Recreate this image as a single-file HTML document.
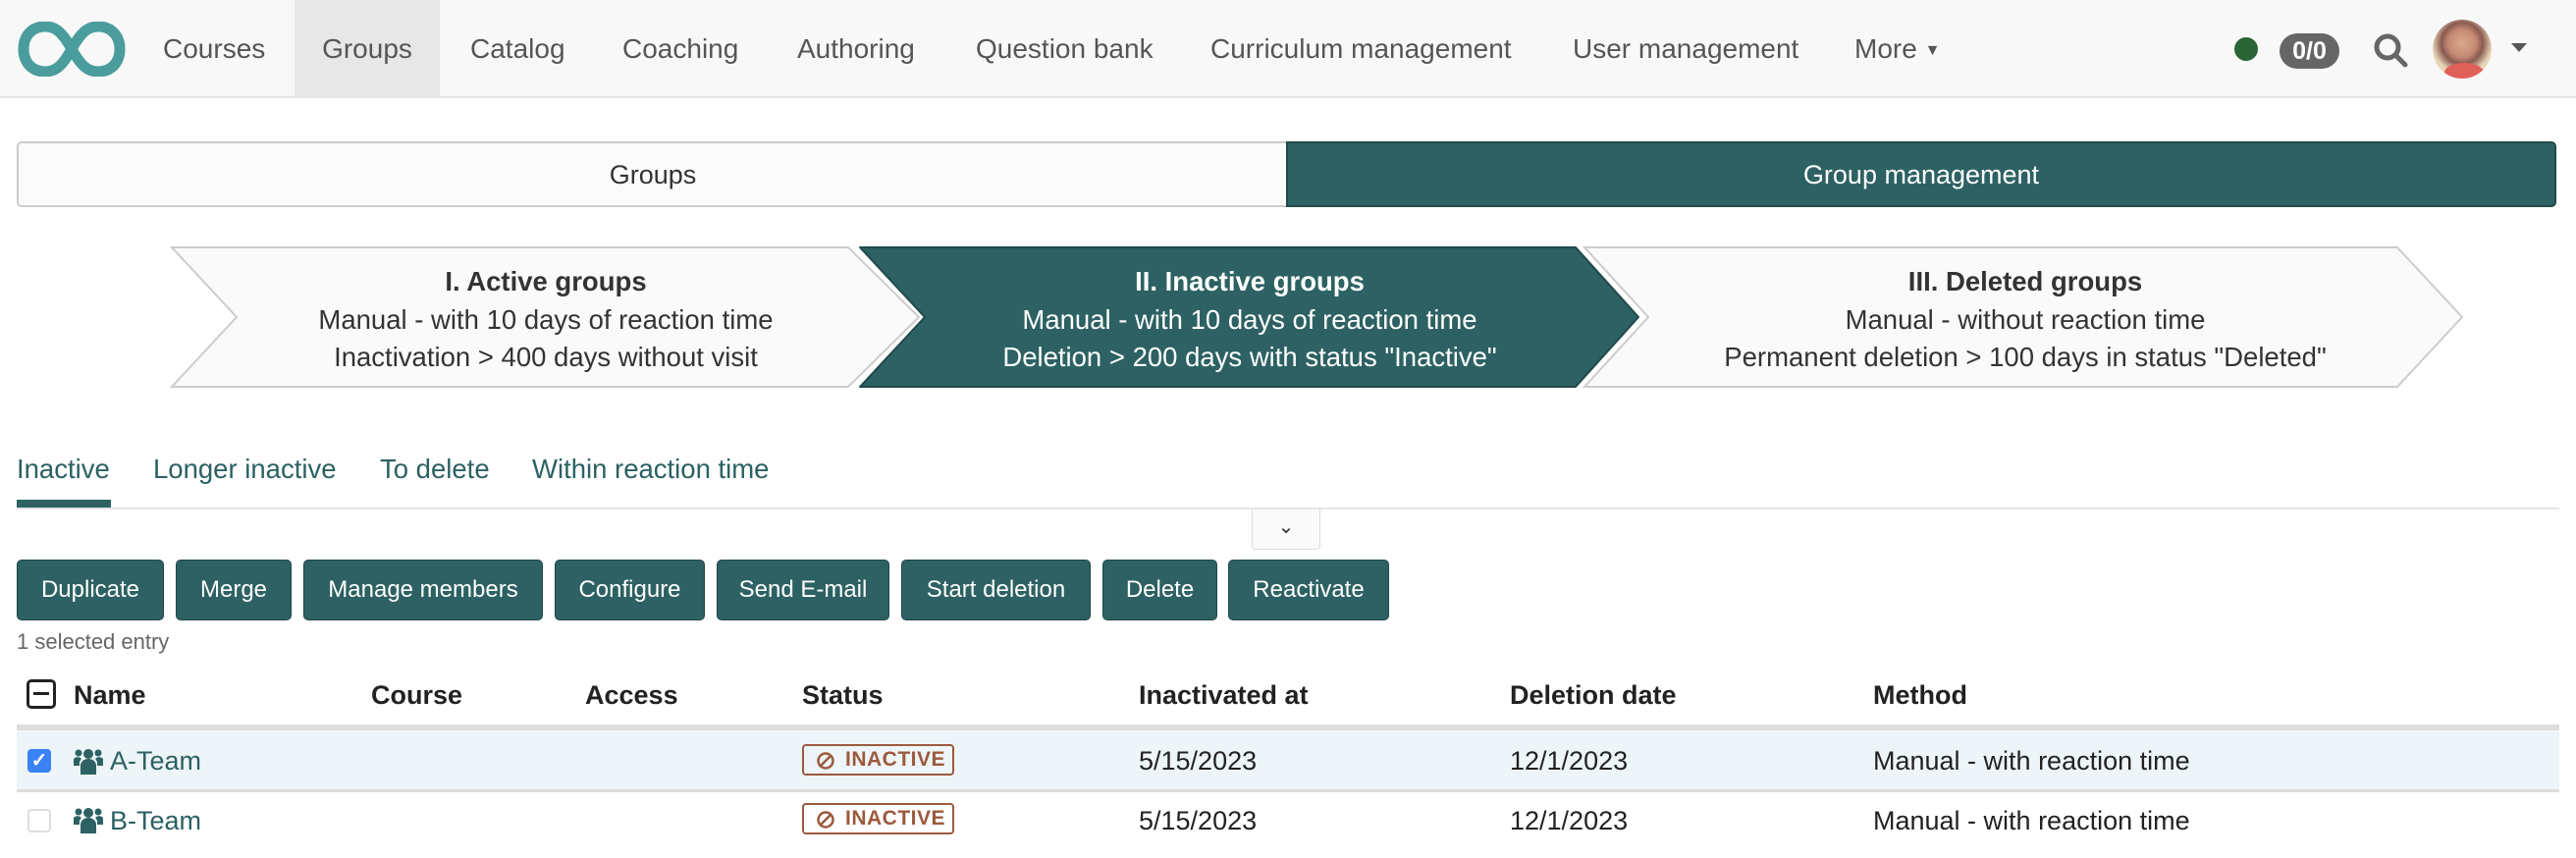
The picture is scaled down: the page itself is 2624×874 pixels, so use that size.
<!DOCTYPE html>
<html><head><meta charset="utf-8">
<style>
*{margin:0;padding:0;box-sizing:border-box}
body{width:2624px;height:874px;background:#fff;font-family:"Liberation Sans",Arial,sans-serif;position:relative;overflow:hidden;color:#222}
.abs{position:absolute}
#nav{left:0;top:0;width:2624px;height:100px;background:#f8f8f8;border-bottom:2px solid #e7e7e7}
.ni{position:absolute;top:0;height:100px;line-height:100px;font-size:28px;color:#555;white-space:nowrap}
.seg{top:144px;height:67px;line-height:65px;font-size:27px;text-align:center}
.st{position:absolute;text-align:center;font-size:27.5px;line-height:38.5px;top:268px;white-space:nowrap}
.tab{top:458px;font-size:27.5px;color:#2c6163;line-height:40px;white-space:nowrap}
.btn{position:absolute;top:570px;height:62px;line-height:60px;background:#2d6163;border:1px solid #1f4748;border-radius:5px;color:#fff;font-size:24px;text-align:center;white-space:nowrap}
.th{position:absolute;top:688px;font-size:27px;font-weight:bold;line-height:40px;white-space:nowrap}
.td{position:absolute;font-size:27px;line-height:40px;white-space:nowrap}
.badge{position:absolute;width:155px;height:32px;border:2px solid #9c5a3c;border-radius:4px;color:#9c5a3c;font-weight:bold;font-size:21px;line-height:28px;padding-left:42px;letter-spacing:.5px}
</style></head><body>
<div id="nav" class="abs">
<svg class="abs" style="left:18px;top:22px" width="110" height="56" viewBox="0 0 110 56"><path d="M55 28 C45 10 38 5 28 5 C14 5 6 15 6 28 C6 41 14 51 28 51 C38 51 45 46 55 28 C65 10 72 5 82 5 C96 5 104 15 104 28 C104 41 96 51 82 51 C72 51 65 46 55 28Z" fill="none" stroke="#4a9d9c" stroke-width="11"/></svg>
<div class="ni" style="left:166px">Courses</div>
<div class="ni" style="left:300px;width:148px;background:#e7e7e7;text-align:center">Groups</div>
<div class="ni" style="left:479px">Catalog</div>
<div class="ni" style="left:634px">Coaching</div>
<div class="ni" style="left:812px">Authoring</div>
<div class="ni" style="left:994px">Question bank</div>
<div class="ni" style="left:1233px">Curriculum management</div>
<div class="ni" style="left:1602px">User management</div>
<div class="ni" style="left:1889px">More <span style="font-size:16px;vertical-align:3px">▼</span></div>
<div class="abs" style="left:2276px;top:38px;width:24px;height:24px;border-radius:50%;background:#2a6437"></div>
<div class="abs" style="left:2322px;top:34px;width:61px;height:36px;border-radius:18px;background:#666;color:#fff;font-weight:bold;font-size:25px;line-height:36px;text-align:center">0/0</div>
<svg class="abs" style="left:2416px;top:32px" width="40" height="40" viewBox="0 0 40 40"><circle cx="16" cy="16" r="11" fill="none" stroke="#666" stroke-width="5"/><path d="M24 24 L34 34" stroke="#666" stroke-width="5" stroke-linecap="round"/></svg>
<div class="abs" style="left:2478px;top:20px;width:60px;height:60px;border-radius:50%;background:radial-gradient(circle at 50% 40%,#d9a98e 0,#c58a74 30%,#8a5a50 45%,#e8d6b8 65%);overflow:hidden"><div style="position:absolute;left:12px;top:44px;width:40px;height:20px;background:#e0605a;border-radius:50%"></div></div>
<div class="abs" style="left:2558px;top:44px;width:0;height:0;border-left:8px solid transparent;border-right:8px solid transparent;border-top:9px solid #555"></div>
</div>

<div class="abs seg" style="left:17px;width:1294px;background:#fbfbfb;border:2px solid #ccc;border-right:none;border-radius:5px 0 0 5px;color:#333">Groups</div>
<div class="abs seg" style="left:1310px;width:1294px;background:#2d6163;border:2px solid #21494a;border-radius:0 5px 5px 0;color:#fff">Group management</div>

<svg class="abs" style="left:0;top:0" width="2624" height="420">
<polygon points="175,252 864,252 936,323 864,394 175,394 241,323" fill="#fafafa" stroke="#ccc" stroke-width="2"/>
<polygon points="1614,252 2442,252 2508,323 2442,394 1614,394 1679,323" fill="#fafafa" stroke="#ccc" stroke-width="2"/>
<polygon points="876,252 1605,252 1669,323 1605,394 876,394 942,323" fill="#2d6163" stroke="#21494a" stroke-width="2" stroke-linejoin="round"/>
</svg>
<div class="st" style="left:556px;transform:translateX(-50%);color:#333"><b>I. Active groups</b><br>Manual - with 10 days of reaction time<br>Inactivation &gt; 400 days without visit</div>
<div class="st" style="left:1273px;transform:translateX(-50%);color:#fff"><b>II. Inactive groups</b><br>Manual - with 10 days of reaction time<br>Deletion &gt; 200 days with status "Inactive"</div>
<div class="st" style="left:2063px;transform:translateX(-50%);color:#333"><b>III. Deleted groups</b><br>Manual - without reaction time<br>Permanent deletion &gt; 100 days in status "Deleted"</div>

<div class="abs tab" style="left:17px">Inactive</div>
<div class="abs tab" style="left:156px">Longer inactive</div>
<div class="abs tab" style="left:387px">To delete</div>
<div class="abs tab" style="left:542px">Within reaction time</div>
<div class="abs" style="left:17px;top:517px;width:2590px;height:2px;background:#e5e5e5"></div>
<div class="abs" style="left:17px;top:509px;width:96px;height:8px;background:#2d6163"></div>
<div class="abs" style="left:1275px;top:519px;width:70px;height:41px;border:1px solid #ddd;border-top:none;background:#fafafa;border-radius:0 0 4px 4px;text-align:center;font-size:20px;line-height:36px;color:#333">⌄</div>

<div class="btn" style="left:17px;width:150px">Duplicate</div>
<div class="btn" style="left:179px;width:118px">Merge</div>
<div class="btn" style="left:309px;width:244px">Manage members</div>
<div class="btn" style="left:565px;width:153px">Configure</div>
<div class="btn" style="left:730px;width:176px">Send E-mail</div>
<div class="btn" style="left:918px;width:193px">Start deletion</div>
<div class="btn" style="left:1123px;width:117px">Delete</div>
<div class="btn" style="left:1251px;width:164px">Reactivate</div>
<div class="abs" style="left:17px;top:640px;font-size:22px;color:#666;line-height:28px">1 selected entry</div>

<div class="abs" style="left:27px;top:692px;width:30px;height:30px;border:3px solid #222;border-radius:5px"><div style="position:absolute;left:4px;top:10px;width:16px;height:3px;background:#222"></div></div>
<div class="th" style="left:75px">Name</div>
<div class="th" style="left:378px">Course</div>
<div class="th" style="left:596px">Access</div>
<div class="th" style="left:817px">Status</div>
<div class="th" style="left:1160px">Inactivated at</div>
<div class="th" style="left:1538px">Deletion date</div>
<div class="th" style="left:1908px">Method</div>
<div class="abs" style="left:17px;top:738px;width:2590px;height:6px;background:#ddd"></div>
<div class="abs" style="left:17px;top:744px;width:2590px;height:60px;background:#eef5f8"></div>
<div class="abs" style="left:17px;top:804px;width:2590px;height:3px;background:#ddd"></div>

<div class="abs" style="left:28px;top:763px;width:24px;height:24px;border-radius:4px;background:#3b82f6;color:#fff;font-size:20px;line-height:24px;text-align:center;font-weight:bold">✓</div>
<div class="abs" style="left:28px;top:824px;width:24px;height:24px;border-radius:4px;border:2px solid #ddd;background:#fff"></div>
<svg class="abs" style="left:75px;top:760px" width="30" height="30" viewBox="0 0 30 30" fill="#2d6163"><circle cx="15" cy="8" r="5"/><circle cx="5" cy="7" r="3.5"/><circle cx="25" cy="7" r="3.5"/><path d="M7 29 v-9 a8 7 0 0 1 16 0 v9z"/><path d="M0 20 a5 5 0 0 1 8 -7 a10 8 0 0 0 -2 6 v1z"/><path d="M30 20 a5 5 0 0 0 -8 -7 a10 8 0 0 1 2 6 v1z"/></svg>
<svg class="abs" style="left:75px;top:820px" width="30" height="30" viewBox="0 0 30 30" fill="#2d6163"><circle cx="15" cy="8" r="5"/><circle cx="5" cy="7" r="3.5"/><circle cx="25" cy="7" r="3.5"/><path d="M7 29 v-9 a8 7 0 0 1 16 0 v9z"/><path d="M0 20 a5 5 0 0 1 8 -7 a10 8 0 0 0 -2 6 v1z"/><path d="M30 20 a5 5 0 0 0 -8 -7 a10 8 0 0 1 2 6 v1z"/></svg>
<div class="td" style="left:112px;top:755px;color:#2c6163">A-Team</div>
<div class="td" style="left:112px;top:816px;color:#2c6163">B-Team</div>

<div class="badge" style="left:817px;top:758px">INACTIVE<svg style="position:absolute;left:12px;top:5px" width="20" height="20" viewBox="0 0 20 20"><circle cx="10" cy="10" r="7.5" fill="none" stroke="#9c5a3c" stroke-width="2.5"/><path d="M5 15 L15 5" stroke="#9c5a3c" stroke-width="2.5"/></svg></div>
<div class="badge" style="left:817px;top:818px">INACTIVE<svg style="position:absolute;left:12px;top:5px" width="20" height="20" viewBox="0 0 20 20"><circle cx="10" cy="10" r="7.5" fill="none" stroke="#9c5a3c" stroke-width="2.5"/><path d="M5 15 L15 5" stroke="#9c5a3c" stroke-width="2.5"/></svg></div>

<div class="td" style="left:1160px;top:755px">5/15/2023</div>
<div class="td" style="left:1538px;top:755px">12/1/2023</div>
<div class="td" style="left:1908px;top:755px">Manual - with reaction time</div>
<div class="td" style="left:1160px;top:816px">5/15/2023</div>
<div class="td" style="left:1538px;top:816px">12/1/2023</div>
<div class="td" style="left:1908px;top:816px">Manual - with reaction time</div>
</body></html>
